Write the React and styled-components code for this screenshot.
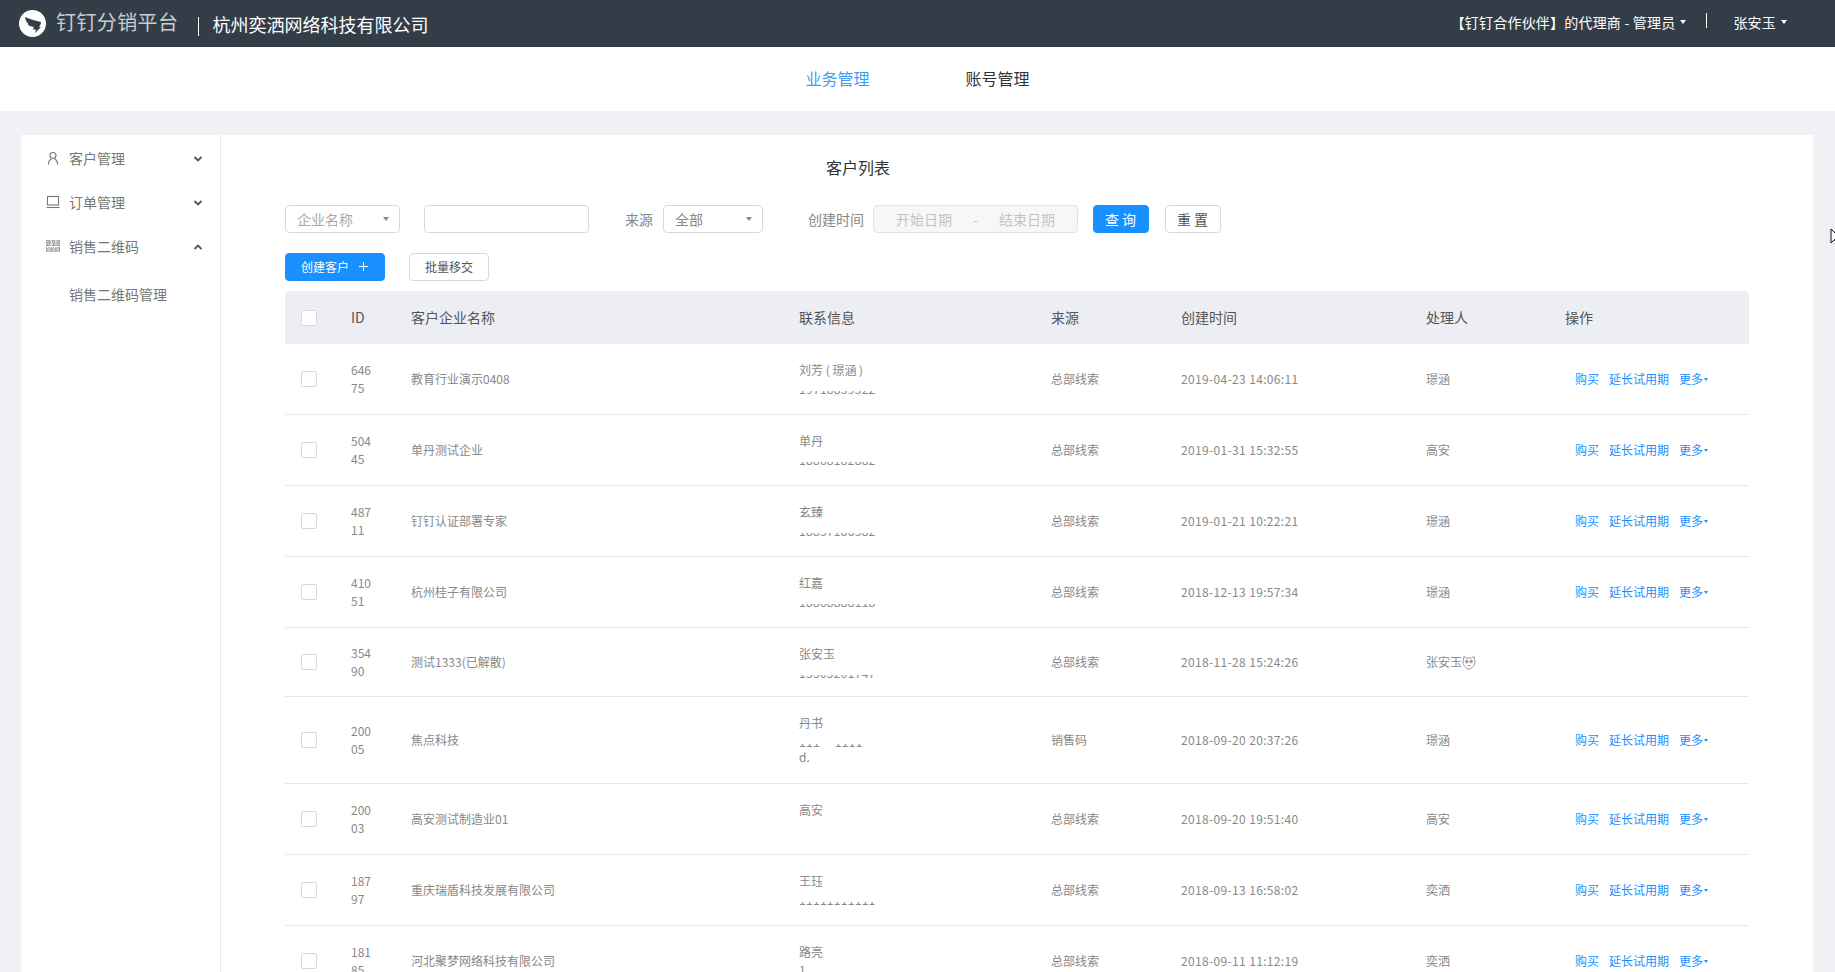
import React from "react";
import styled, { createGlobalStyle } from "styled-components";

const Global = createGlobalStyle`
  html, body { margin: 0; padding: 0; height: 100%; overflow: hidden; background: #f0f1f5; }
  body { font-family: "Noto Sans CJK SC", "Liberation Sans", sans-serif; color: #888; }
  * { box-sizing: border-box; }
`;

const Page = styled.div`
  height: 972px;
  display: flex;
  flex-direction: column;
  overflow: hidden;
`;
const TopBar = styled.header`
  height: 47px;
  flex: none;
  background: #333d48;
  display: flex;
  align-items: center;
  padding-left: 19px;
  color: #fff;
`;
const LogoText = styled.span`
  font-size: 20px;
  line-height: 28px;
  letter-spacing: 0.4px;
  color: #c9cdd1;
  margin-left: 10px;
  margin-top: -3px;
`;
const Company = styled.span`
  font-size: 18px;
  line-height: 26px;
  margin-left: 13px;
  margin-top: 1px;
`;
const Divider = styled.i`
  display: block;
  width: 1px;
  background: #fff;
  height: ${p => p.$h}px;
  margin: ${p => p.$m};
`;
const TopRight = styled.div`
  margin-left: auto;
  display: flex;
  align-items: center;
  font-size: 14px;
  line-height: 20px;
  letter-spacing: 0.2px;
  padding-right: 48px;
  margin-top: -4px;
`;
const Caret = styled.i`
  display: inline-block;
  width: 0;
  height: 0;
  border-left: ${p => p.$s}px solid transparent;
  border-right: ${p => p.$s}px solid transparent;
  border-top: ${p => p.$s + 1}px solid ${p => p.$c};
  margin-left: ${p => p.$ml || 5}px;
  flex: none;
`;
const NavBar = styled.nav`
  height: 64px;
  flex: none;
  background: #fff;
  display: flex;
  justify-content: center;
  align-items: center;
  gap: 96px;
  padding-bottom: 2px;
`;
const NavItem = styled.a`
  font-size: 16px;
  line-height: 24px;
  color: ${p => (p.$active ? "#3e9bf7" : "#333")};
`;
const Main = styled.main`
  flex: 1;
  min-height: 0;
  padding: 24px 22px 0 21px;
`;
const Panel = styled.div`
  height: 100%;
  background: #fff;
  display: flex;
`;
const Sidebar = styled.aside`
  width: 200px;
  flex: none;
  border-right: 1px solid #e8e8e8;
  padding-top: 2px;
`;
const MenuRow = styled.div`
  height: 44px;
  display: flex;
  align-items: center;
  padding: 0 0 2px 25px;
  font-size: 14px;
  color: #777;
`;
const MenuIcon = styled.svg`
  width: 14px;
  height: 14px;
  flex: none;
  margin-right: 9px;
  color: #777;
`;
const Chevron = styled.svg`
  width: 10px;
  height: 10px;
  margin: 2px 17px 0 auto;
  color: #555;
`;
const SubRow = styled.div`
  height: 52px;
  display: flex;
  align-items: center;
  padding: 0 0 2px 48px;
  font-size: 14px;
  color: #777;
`;
const Content = styled.section`
  flex: 1;
  min-width: 0;
  padding-left: 64px;
  padding-right: 64px;
`;
const Title = styled.h2`
  margin: 19px 0 0 541px;
  font-size: 16px;
  line-height: 26px;
  font-weight: 400;
  color: #333;
`;
const FilterRow = styled.div`
  display: flex;
  align-items: center;
  margin-top: 25px;
  height: 28px;
`;
const Select = styled.div`
  width: ${p => p.$w}px;
  margin-left: ${p => p.$ml || 0}px;
  height: 28px;
  border: 1px solid #d9d9d9;
  border-radius: 4px;
  display: flex;
  align-items: center;
  justify-content: space-between;
  padding: 0 10px 0 11px;
  font-size: 14px;
  color: ${p => p.$c};
`;
const Input = styled.div`
  width: 165px;
  height: 28px;
  margin-left: 24px;
  border: 1px solid #d9d9d9;
  border-radius: 4px;
`;
const Label = styled.span`
  font-size: 14px;
  color: #888;
  margin-left: ${p => p.$ml}px;
  margin-right: ${p => p.$mr}px;
`;
const DateRange = styled.div`
  width: 205px;
  height: 28px;
  border: 1px solid #e3e3e3;
  border-radius: 4px;
  background: #f7f7f7;
  display: flex;
  align-items: center;
  justify-content: space-between;
  padding: 0 22px;
  font-size: 14px;
  color: #c4c4c4;
`;
const Button = styled.button`
  width: ${p => p.$w}px;
  height: 28px;
  margin-left: ${p => p.$ml}px;
  padding: 0 0 ${p => (p.$fs === 12 ? 2 : 0)}px ${p => (p.$fs === 14 ? 2 : 0)}px;
  font-family: inherit;
  font-size: ${p => p.$fs}px;
  letter-spacing: ${p => p.$ls || 0}px;
  border-radius: 4px;
  border: 1px solid ${p => (p.$primary ? "#1890ff" : "#d9d9d9")};
  background: ${p => (p.$primary ? "#1890ff" : "#fff")};
  color: ${p => (p.$primary ? "#fff" : "#555")};
  display: inline-flex;
  align-items: center;
  justify-content: center;
`;
const ActionRow = styled.div`
  display: flex;
  margin-top: 20px;
  margin-bottom: 10px;
`;
const Plus = styled.svg`
  width: 11px;
  height: 11px;
  margin-left: 9px;
`;
const Table = styled.div`
  width: 1464px;
`;
const COLS = "66px 60px 388px 252px 130px 245px 139px 1fr";
const HeadRow = styled.div`
  display: grid;
  grid-template-columns: ${COLS};
  align-items: center;
  height: 53px;
  background: #edeef3;
  border-radius: 4px 4px 0 0;
  font-size: 14px;
  color: #555;
`;
const HeadCell = styled.span`
  margin-bottom: 2px;
`;
const Row = styled.div`
  display: grid;
  grid-template-columns: ${COLS};
  align-items: center;
  height: ${p => p.$h}px;
  border-bottom: 1px solid #e8e8e8;
  font-size: 12px;
  line-height: 18px;
  color: #888;
`;
const CheckCell = styled.div`
  padding-left: 16px;
  display: flex;
`;
const Check = styled.span`
  width: 16px;
  height: 16px;
  background: #fff;
  border: 1px solid #d9d9d9;
  border-radius: 2px;
`;
const IdCell = styled.div`
  width: 24px;
  word-break: break-all;
`;
const ContactCell = styled.div`
  align-self: start;
  padding-top: 17px;
`;
const Sliver = styled.div`
  height: 4px;
  margin-top: 12px;
  overflow: hidden;
  display: flex;
  align-items: flex-end;
  white-space: pre;
  letter-spacing: 0.3px;
  span { line-height: 12px; }
`;
const TimeCell = styled.span`
  letter-spacing: 0.35px;
`;
const NameLine = styled.div`
  display: flex;
  align-items: center;
`;
const Bear = styled.svg`
  width: 14px;
  height: 15px;
  color: #999;
`;
const Ops = styled.div`
  display: flex;
  align-items: center;
  padding-left: 10px;
  color: #1890ff;
  gap: 10px;
`;
const More = styled.span`
  display: inline-flex;
  align-items: center;
`;
const Cursor = styled.svg`
  position: fixed;
  left: 1830px;
  top: 228px;
  width: 12px;
  height: 18px;
`;

const rows = [
  { id: "64675", name: "教育行业演示0408", c: "刘芳 ( 璟涵 )", p: "19718859522", s: "总部线索", t: "2019-04-23 14:06:11", h: "璟涵", H: 71 },
  { id: "50445", name: "单丹测试企业", c: "单丹", p: "18868182882", s: "总部线索", t: "2019-01-31 15:32:55", h: "高安", H: 71 },
  { id: "48711", name: "钉钉认证部署专家", c: "玄臻", p: "18837186382", s: "总部线索", t: "2019-01-21 10:22:21", h: "璟涵", H: 71 },
  { id: "41051", name: "杭州桂子有限公司", c: "红嘉", p: "18868888118", s: "总部线索", t: "2018-12-13 19:57:34", h: "璟涵", H: 71 },
  { id: "35490", name: "测试1333(已解散)", c: "张安玉", p: "13305201747", s: "总部线索", t: "2018-11-28 15:24:26", h: "张安玉", H: 69, bear: true, noOps: true },
  { id: "20005", name: "焦点科技", c: "丹书", p: "111     1111", tail: "d.", s: "销售码", t: "2018-09-20 20:37:26", h: "璟涵", H: 87 },
  { id: "20003", name: "高安测试制造业01", c: "高安", s: "总部线索", t: "2018-09-20 19:51:40", h: "高安", H: 71 },
  { id: "18797", name: "重庆瑞盾科技发展有限公司", c: "王珏", p: "11111111111", s: "总部线索", t: "2018-09-13 16:58:02", h: "奕洒", H: 71 },
  { id: "18185", name: "河北聚梦网络科技有限公司", c: "路亮", tail: "1", s: "总部线索", t: "2018-09-11 11:12:19", h: "奕洒", H: 71 },
];

const QR_BITS = [
  "111101110111",
  "101101010101",
  "111101110111",
  "010100101010",
  "111101110111",
  "000000000000",
  "101010101011",
  "110111011101",
  "101010101011",
  "110111011101",
];

const Down = () => (
  <Chevron viewBox="0 0 10 10"><path d="M1.5 3l3.500 3.500L8.500 3" fill="none" stroke="currentColor" strokeWidth="1.8" /></Chevron>
);
const Up = () => (
  <Chevron viewBox="0 0 10 10"><path d="M1.500 7L5 3.500 8.500 7" fill="none" stroke="currentColor" strokeWidth="1.8" /></Chevron>
);

export default function App() {
  return (
    <Page>
      <Global />
      <TopBar>
        <svg width="27" height="27" viewBox="0 0 27 27">
          <circle cx="13.5" cy="13.5" r="13.5" fill="#fff" />
          <path d="M6 7C11 9 17 11 22 12c0 2-1 3.500-2 5h2l-6 6 1-3.500h-3l.8-2.500c-3-.5-5.500-1-6.300-3.500l1 .2C7.500 12.500 6.500 10 6 7Z" fill="#333d48" />
        </svg>
        <LogoText>钉钉分销平台</LogoText>
        <Divider $h={19} $m="5px 0 0 20px" />
        <Company>杭州奕洒网络科技有限公司</Company>
        <TopRight>
          【钉钉合作伙伴】的代理商 - 管理员
          <Caret $s={3} $c="#fff" />
          <Divider $h={15} $m="-3px 26px 0 20px" />
          张安玉
          <Caret $s={3} $c="#fff" />
        </TopRight>
      </TopBar>
      <NavBar>
        <NavItem $active>业务管理</NavItem>
        <NavItem>账号管理</NavItem>
      </NavBar>
      <Main>
        <Panel>
          <Sidebar>
            <MenuRow>
              <MenuIcon viewBox="0 0 14 14" fill="none" stroke="currentColor" strokeWidth="1.1">
                <circle cx="7" cy="4.500" r="3" />
                <path d="M2.500 13.500c0-3 1.500-5 3-5.500M11.500 13.500c0-3-1.500-5-3-5.500" />
              </MenuIcon>
              客户管理<Down />
            </MenuRow>
            <MenuRow>
              <MenuIcon viewBox="0 0 14 14" fill="none" stroke="currentColor" strokeWidth="1.1">
                <rect x="1.500" y="1.500" width="11" height="8.500" />
                <path d="M0.500 12.500h13" />
              </MenuIcon>
              订单管理<Down />
            </MenuRow>
            <MenuRow>
              <MenuIcon viewBox="0 0 12 10" fill="#8a8a8a">
                {QR_BITS.map((line, y) =>
                  line.split("").map((b, x) =>
                    b === "1" ? <rect key={`${x}-${y}`} x={x} y={y} width="1" height="1" /> : null
                  )
                )}
              </MenuIcon>
              销售二维码<Up />
            </MenuRow>
            <SubRow>销售二维码管理</SubRow>
          </Sidebar>
          <Content>
            <Title>客户列表</Title>
            <FilterRow>
              <Select $w={115} $c="#aaa">企业名称<Caret $s={3} $c="#888" /></Select>
              <Input />
              <Label $ml={36} $mr={10}>来源</Label>
              <Select $w={100} $c="#888">全部<Caret $s={3} $c="#888" /></Select>
              <Label $ml={45} $mr={9}>创建时间</Label>
              <DateRange><span>开始日期</span><span>-</span><span>结束日期</span></DateRange>
              <Button $primary $w={56} $ml={15} $fs={14} $ls={3}>查询</Button>
              <Button $w={56} $ml={16} $fs={14} $ls={3}>重置</Button>
            </FilterRow>
            <ActionRow>
              <Button $primary $w={100} $ml={0} $fs={12}>
                创建客户
                <Plus viewBox="0 0 11 11"><path d="M5.500 1v9M1 5.500h9" stroke="#fff" strokeWidth="1" /></Plus>
              </Button>
              <Button $w={80} $ml={24} $fs={12}>批量移交</Button>
            </ActionRow>
            <Table>
              <HeadRow>
                <CheckCell><Check /></CheckCell>
                <HeadCell>ID</HeadCell>
                <HeadCell>客户企业名称</HeadCell>
                <HeadCell>联系信息</HeadCell>
                <HeadCell>来源</HeadCell>
                <HeadCell>创建时间</HeadCell>
                <HeadCell>处理人</HeadCell>
                <HeadCell>操作</HeadCell>
              </HeadRow>
              {rows.map(r => (
                <Row key={r.id} $h={r.H}>
                  <CheckCell><Check /></CheckCell>
                  <IdCell>{r.id}</IdCell>
                  <span>{r.name}</span>
                  <ContactCell>
                    <div>{r.c}</div>
                    {r.p && <Sliver><span>{r.p}</span></Sliver>}
                    {r.tail && <div>{r.tail}</div>}
                  </ContactCell>
                  <span>{r.s}</span>
                  <TimeCell>{r.t}</TimeCell>
                  <NameLine>
                    {r.h}
                    {r.bear && (
                      <Bear viewBox="0 0 14 15" fill="none" stroke="currentColor" strokeWidth="1">
                        <path d="M2 1.500 4.500 3h5L12 1.500 13 7c0 3-3 6.500-6 7.500C4 13.500 1 10 1 7Z" />
                        <circle cx="4.800" cy="6.500" r="1.300" fill="currentColor" />
                        <circle cx="9.200" cy="6.500" r="1.300" fill="currentColor" />
                        <path d="M5.500 10.500h3" />
                      </Bear>
                    )}
                  </NameLine>
                  {r.noOps ? <span /> : (
                    <Ops>
                      <span>购买</span>
                      <span>延长试用期</span>
                      <More>更多<Caret $s={2} $c="#1890ff" $ml={1} /></More>
                    </Ops>
                  )}
                </Row>
              ))}
            </Table>
          </Content>
        </Panel>
      </Main>
      <Cursor viewBox="0 0 12 18"><path d="M1 1v14l3.500-3.500L7 17l2-1-2.500-5H11Z" fill="#fff" stroke="#111" strokeWidth="1" /></Cursor>
    </Page>
  );
}
